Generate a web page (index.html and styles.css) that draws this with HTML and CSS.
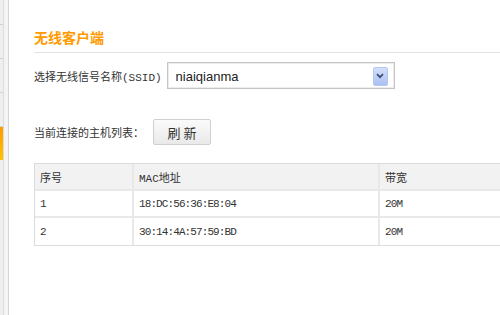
FILE: index.html
```html
<!DOCTYPE html>
<html lang="zh-CN">
<head>
    <meta charset="UTF-8">
    <meta name="viewport" content="width=device-width, initial-scale=1.0">
    <title>无线客户端</title>
    <link rel="stylesheet" href="styles.css">
</head>
<body>
    <div class="page">
        <!-- Menu lateral (recortado) -->
        <div class="sidebar">
            <div class="nav">
                <div class="nav-item first"></div>
                <div class="nav-item"></div>
                <div class="nav-item"></div>
                <div class="nav-item"></div>
                <div class="nav-item active"></div>
            </div>
            <div class="gutter"></div>
        </div>

        <div class="main">
            <h2 class="title">无线客户端</h2>

            <div class="form-row ssid-row">
                <label for="ssid">选择无线信号名称<span class="ascii">(SSID)</span></label>
                <div class="select-box">
                    <span class="select-value">niaiqianma</span>
                    <span class="select-arrow">
                        <svg width="8" height="6" viewBox="0 0 8 6"><path d="M1 1.2 L4 4.2 L7 1.2" fill="none" stroke="#3f4f6e" stroke-width="1.8"/></svg>
                    </span>
                </div>
            </div>

            <div class="form-row refresh-row">
                <span>当前连接的主机列表：</span>
                <button class="btn">刷 新</button>
            </div>

            <table class="hosts">
                <thead>
                    <tr>
                        <th class="col-num">序号</th>
                        <th class="col-mac"><span class="ascii">MAC</span>地址</th>
                        <th class="col-bw">带宽</th>
                    </tr>
                </thead>
                <tbody>
                    <tr>
                        <td>1</td>
                        <td>18:DC:56:36:E8:04</td>
                        <td>20M</td>
                    </tr>
                    <tr class="last">
                        <td>2</td>
                        <td>30:14:4A:57:59:BD</td>
                        <td>20M</td>
                    </tr>
                </tbody>
            </table>
        </div>
    </div>
</body>
</html>
```

FILE: styles.css
```css
/* Base */
body {
    margin: 0;
    padding: 0;
    background-color: #fff;
    color: #333;
    font-family: "Noto Sans CJK SC", "Liberation Sans", sans-serif;
    font-size: 11px;
    overflow: hidden;
}

.page {
    display: flex;
    height: 315px;
}

.ascii {
    font-family: "Liberation Mono", monospace;
    font-size: 11px;
}

/* Menu lateral */
.sidebar {
    display: flex;
    flex-shrink: 0;
}

.nav {
    width: 3px;
    background-color: #efefef;
    border-right: 1px solid #dcdcdc;
}

.nav-item {
    height: 33px;
    border-bottom: 1px solid #d2d2d2;
}

.nav-item.first {
    height: 24px;
}

.nav-item.active {
    border-bottom: none;
    background: linear-gradient(#ff9a00, #ffc400);
}

.gutter {
    width: 4px;
    background-color: #f4f4f4;
    border-right: 1px solid #d6d6d6;
}

/* Conteudo */
.main {
    flex: 1;
    padding-left: 25px;
    min-width: 0;
}

.title {
    margin: 0;
    padding-top: 27px;
    padding-bottom: 5px;
    line-height: 20px;
    font-size: 14px;
    font-weight: bold;
    color: #ff9a00;
    border-bottom: 1px solid #e3e3e3;
}

.form-row {
    display: flex;
    align-items: center;
}

.ssid-row {
    margin-top: 9px;
    gap: 5px;
}

.select-box {
    display: flex;
    align-items: center;
    justify-content: space-between;
    width: 228px;
    height: 27px;
    padding: 1px 6px 0 8px;
    border: 1px solid #c4c4c4;
    box-shadow: inset 0 0 0 1px #ececec;
    box-sizing: border-box;
}

.select-value {
    font-family: "Liberation Sans", sans-serif;
    font-size: 13px;
    color: #222;
}

.select-arrow {
    display: flex;
    align-items: center;
    justify-content: center;
    width: 13px;
    height: 17px;
    border: 1px solid #b4c7ee;
    border-radius: 2px;
    background: linear-gradient(#d4e0fb, #a9c0f2);
}

.refresh-row {
    margin-top: 30px;
    gap: 9px;
}

.btn {
    width: 58px;
    height: 26px;
    padding: 0;
    border: 1px solid #cfcfcf;
    border-radius: 2px;
    background: linear-gradient(#fbfbfb, #e9e9e9);
    font-family: "Noto Sans CJK SC", sans-serif;
    font-size: 13px;
    color: #333;
}

/* Tabela de hosts */
.hosts {
    margin-top: 18px;
    width: 500px;
    border-collapse: separate;
    border-spacing: 0;
    border-top: 1px solid #dcdcdc;
    border-left: 1px solid #dcdcdc;
}

.hosts th,
.hosts td {
    height: 25px;
    padding: 0 0 0 5px;
    text-align: left;
    border-right: 2px solid #e8e8e8;
    border-bottom: 2px solid #e8e8e8;
}

.hosts th {
    background-color: #f2f2f2;
    font-weight: normal;
    font-size: 11px;
}

.hosts td {
    font-family: "Liberation Mono", monospace;
    font-size: 11px;
    letter-spacing: -0.9px;
}

.hosts tr.last td {
    height: 27px;
    border-bottom: 1px solid #dcdcdc;
}

.col-num {
    width: 92px;
}

.col-mac {
    width: 239px;
}
```
